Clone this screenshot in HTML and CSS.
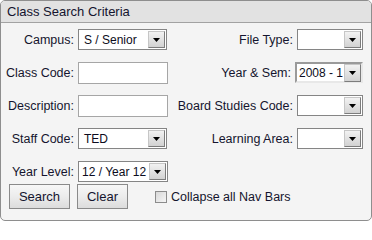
FILE: index.html
```html
<!DOCTYPE html>
<html>
<head>
<meta charset="utf-8">
<link rel="stylesheet" href="styles.css">
</head>
<body>
<div class="panel">
  <div class="header">Class Search Criteria</div>
  <div class="form">
    <label class="lbl">Campus:</label>
    <div class="ctl"><div class="select w89"><span class="val">S / Senior</span><span class="arrow"><svg width="7" height="4" viewBox="0 0 7 4"><path d="M0 0H7L3.5 4Z" fill="#000"/></svg></span></div></div>
    <label class="lbl">File Type:</label>
    <div class="ctl"><div class="select w66"><span class="val"></span><span class="arrow"><svg width="7" height="4" viewBox="0 0 7 4"><path d="M0 0H7L3.5 4Z" fill="#000"/></svg></span></div></div>

    <label class="lbl">Class Code:</label>
    <div class="ctl"><input class="text" type="text"></div>
    <label class="lbl lbl-sem">Year &amp; Sem:</label>
    <div class="ctl"><div class="select sem"><span class="val">2008 - 1</span><span class="arrow"><svg width="7" height="4" viewBox="0 0 7 4"><path d="M0 0H7L3.5 4Z" fill="#000"/></svg></span></div></div>

    <label class="lbl">Description:</label>
    <div class="ctl"><input class="text" type="text"></div>
    <label class="lbl">Board Studies Code:</label>
    <div class="ctl"><div class="select w66"><span class="val"></span><span class="arrow"><svg width="7" height="4" viewBox="0 0 7 4"><path d="M0 0H7L3.5 4Z" fill="#000"/></svg></span></div></div>

    <label class="lbl">Staff Code:</label>
    <div class="ctl"><div class="select w89"><span class="val">TED</span><span class="arrow"><svg width="7" height="4" viewBox="0 0 7 4"><path d="M0 0H7L3.5 4Z" fill="#000"/></svg></span></div></div>
    <label class="lbl">Learning Area:</label>
    <div class="ctl"><div class="select w66"><span class="val"></span><span class="arrow"><svg width="7" height="4" viewBox="0 0 7 4"><path d="M0 0H7L3.5 4Z" fill="#000"/></svg></span></div></div>

    <label class="lbl">Year Level:</label>
    <div class="ctl"><div class="select w90"><span class="val tight">12 / Year 12</span><span class="arrow"><svg width="7" height="4" viewBox="0 0 7 4"><path d="M0 0H7L3.5 4Z" fill="#000"/></svg></span></div></div>
  </div>
  <div class="actions">
    <button class="btn btn-search" type="button">Search</button>
    <button class="btn btn-clear" type="button">Clear</button>
    <label class="check"><span class="box"></span>Collapse all Nav Bars</label>
  </div>
</div>
</body>
</html>
```

FILE: styles.css
```css
html, body {
  margin: 0;
  padding: 0;
  background: #ffffff;
}

body {
  font-family: "Liberation Sans", Arial, sans-serif;
  font-size: 12.5px;
  color: #14142e;
}

.panel {
  box-sizing: border-box;
  width: 372px;
  height: 221px;
  border: 1px solid #8e8e8e;
  border-radius: 5px;
  background: #f4f4f4;
  overflow: hidden;
}

.header {
  height: 21px;
  line-height: 21px;
  padding-left: 6px;
  background: #e2e2e2;
  border-bottom: 1px solid #a2a2a2;
  font-size: 13px;
  color: #14142e;
}

.form {
  display: grid;
  grid-template-columns: 77px 90px 129px 66px;
  grid-auto-rows: 23px;
  row-gap: 10px;
  padding-top: 5px;
}

.lbl {
  display: flex;
  align-items: center;
  justify-content: flex-end;
  padding-right: 4px;
  white-space: nowrap;
}

.lbl-sem {
  padding-right: 6px;
}

.ctl {
  display: flex;
  align-items: center;
}

.select {
  box-sizing: border-box;
  height: 21px;
  display: flex;
  align-items: center;
  justify-content: space-between;
  background: #ffffff;
  border: 1px solid #858585;
  padding: 1px;
}

.w89 { width: 89px; }
.w90 { width: 90px; }
.w66 { width: 66px; }

.val {
  flex: 1;
  min-width: 0;
  padding-left: 4px;
  white-space: nowrap;
  overflow: hidden;
  font-size: 12px;
  color: #0c0c20;
}

.val.tight {
  padding-left: 2px;
}

.arrow {
  box-sizing: border-box;
  flex: none;
  width: 17px;
  height: 17px;
  display: flex;
  align-items: center;
  justify-content: center;
  border: 1px solid;
  border-color: #c6c6c6 #7c7c7c #7c7c7c #c6c6c6;
  background: linear-gradient(#f2f2f2, #d2d2d2);
}

.sem {
  width: 68px;
  margin-left: -2px;
  border: 2px solid;
  border-color: #9a9a9a #e8e8e8 #e8e8e8 #9a9a9a;
  padding: 0;
}

.sem .val {
  padding-left: 2px;
}

.sem .arrow {
  height: 18px;
}

.text {
  box-sizing: border-box;
  width: 90px;
  height: 22px;
  margin: 0;
  border: 1px solid #a6a6a6;
  background: #ffffff;
  padding: 0 3px;
  font-family: inherit;
}

.actions {
  display: flex;
  align-items: center;
  padding-left: 8px;
  margin-top: 1px;
}

.btn {
  box-sizing: border-box;
  height: 25px;
  margin: 0;
  padding: 0;
  border: 1px solid #8a8a8a;
  background: linear-gradient(#f7f7f7 0%, #ececec 50%, #dcdcdc 100%);
  font-family: inherit;
  font-size: 13px;
  color: #14142e;
}

.btn-search { width: 61px; }
.btn-clear { width: 51px; margin-left: 7px; }

.check {
  display: flex;
  align-items: center;
  margin-left: 27px;
  font-size: 12.5px;
}

.box {
  box-sizing: border-box;
  width: 12px;
  height: 12px;
  margin-right: 4px;
  border: 1px solid #8c8c8c;
  background: linear-gradient(135deg, #d8d8d8, #f6f6f6);
}
```
